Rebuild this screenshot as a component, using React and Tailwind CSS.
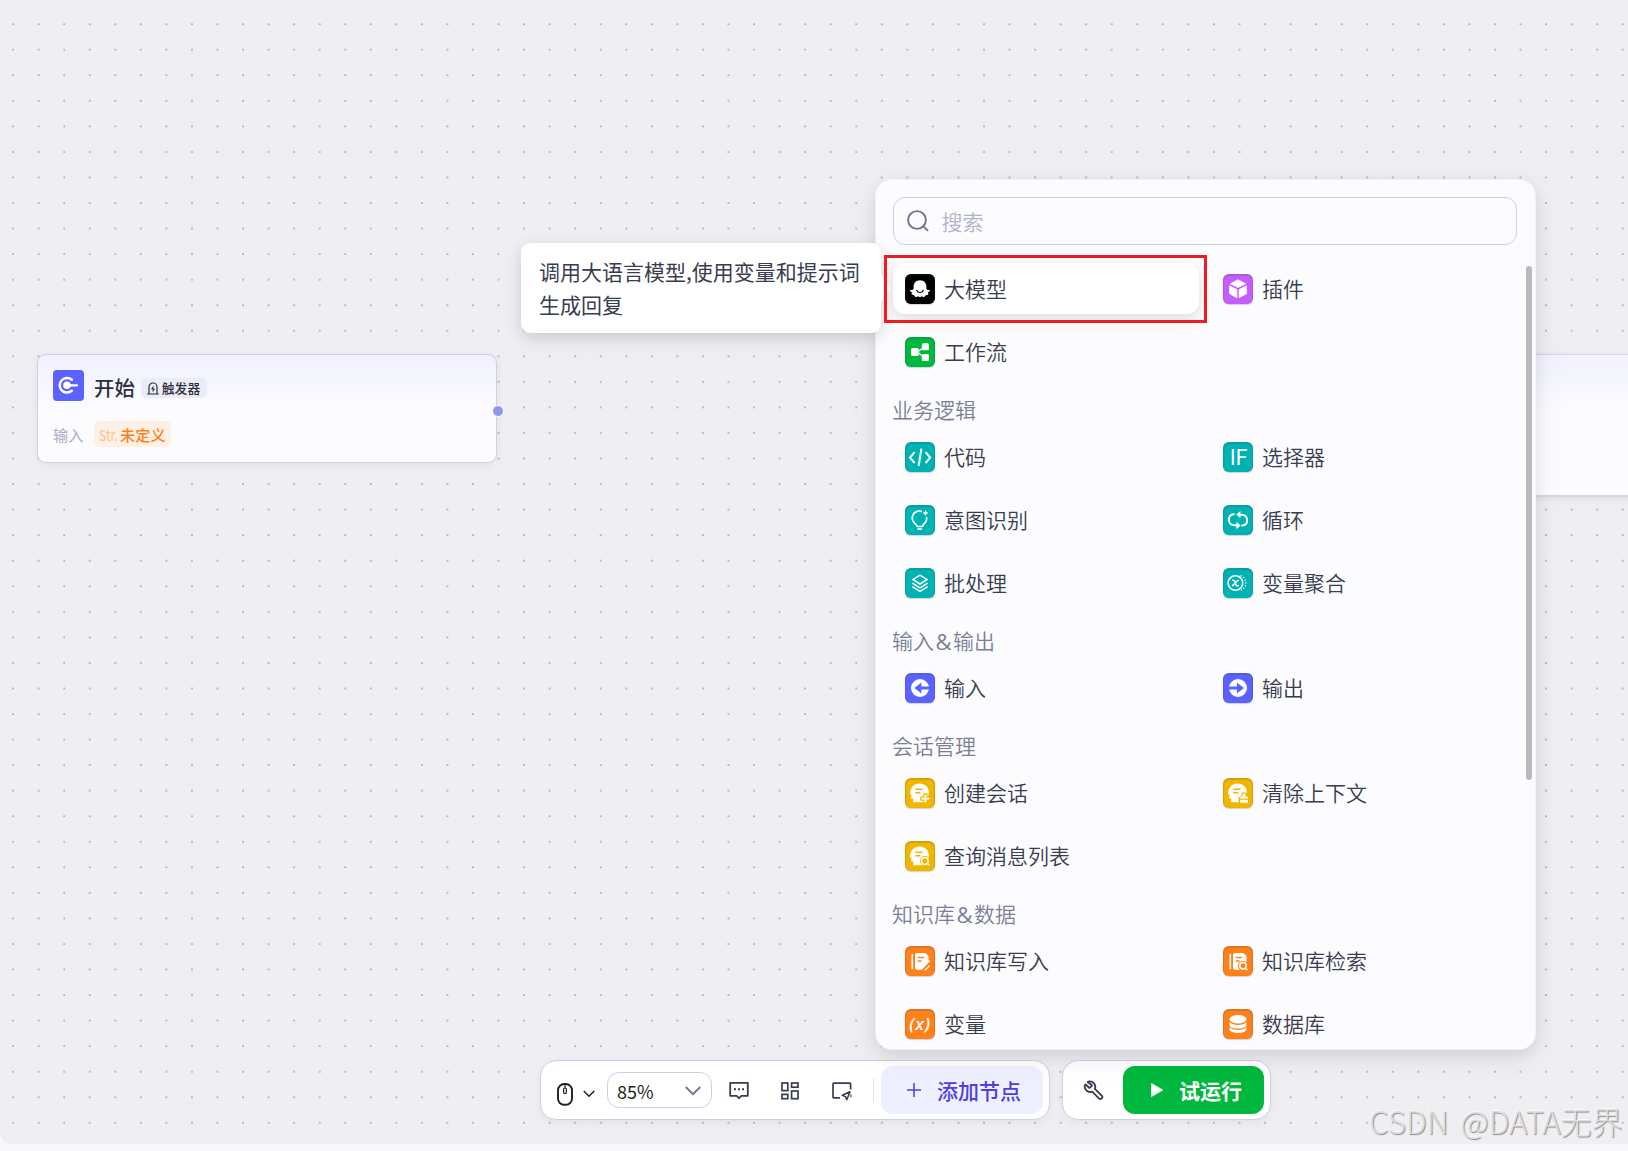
import { useState } from "react";

const TEAL = "bg-[#00b2b2]";
const ORANGE = "bg-[#ff811a]";
const YELLOW = "bg-[#f2b600]";
const INDIGO = "bg-[#5c62ff]";

const ChatHead = () => (
  <>
    <path
      d="M14.6 5.4c5.2 0 9.2 3.8 9.2 8.6 0 4-1.6 6.500-3.600 8v2.200H8.200v-3.600H6.800c-.5 0-.8-.4-.7-.9l.4-2.600-1.300-.9c-.3-.2-.3-.4-.2-.7C5.200 9.500 9.200 5.400 14.600 5.400Z"
      fill="#fff"
    />
    <path d="M10.300 11.200h7.200M10.300 14.700h5" stroke="#f2b600" strokeWidth="1.500" />
  </>
);

const BookPage = () => (
  <>
    <path d="M7.300 8.800v13.600" stroke="#fff" strokeWidth="1.600" strokeLinecap="round" />
    <path
      d="M12 7h8.300l3.200 3v10.500a3 3 0 0 1-3 3.200H12a2 2 0 0 1-2-2V9a2 2 0 0 1 2-2Z"
      fill="#fff"
    />
    <path d="M12.800 11.400h6.200M12.800 15.100h3.800" stroke="#ff811a" strokeWidth="1.500" />
  </>
);

const glyphs = {
  llm: (
    <>
      <path
        d="M15 6.200c4 0 6.400 2.900 6.400 6.400v2.100c.3 1.100 1.600 1.200 3.100 1.200.7 0 .8.800.3 1.200-.7.600-1.500.8-1.700 1.400-.2.700.5 1.400.1 2.100-.5.900-1.900.4-2.700.9-.6.4-.6 1.500-1.600 1.600-1 .1-1.500-.9-2.300-.9-.6 0-.9 1-1.700 1s-1-1-1.700-1c-.8 0-1.300 1-2.300.9-1-.1-.9-1.200-1.500-1.600-.8-.5-2.200 0-2.700-.9-.4-.7.3-1.400.1-2.100-.2-.6-1-.8-1.700-1.400-.5-.4-.4-1.200.3-1.200 1.500 0 2.900-.1 3.200-1.200v-2.100C8.600 9.100 11 6.200 15 6.200Z"
        fill="#fff"
      />
      <path d="M11.700 16.300c1.200 2.900 5.400 2.900 6.600 0" stroke="#000" strokeWidth="1.100" fill="none" strokeLinecap="round" />
    </>
  ),
  plugin: (
    <g fill="#fff" stroke="#fff" strokeWidth=".8" strokeLinejoin="round">
      <path d="M15 5.800 22.500 9.700 15 13.500 7.500 9.700Z" />
      <path d="M6.600 11.800 13.900 15.600V23.700L6.600 19.700Z" />
      <path d="M23.400 11.800 16.100 15.600V23.700L23.400 19.700Z" />
    </g>
  ),
  workflow: (
    <>
      <rect x="6" y="11" width="7.800" height="8" rx="1.500" fill="#fff" />
      <rect x="16.800" y="6.200" width="7.200" height="7" rx="1.500" fill="#fff" />
      <rect x="16.800" y="17" width="7.200" height="7" rx="1.500" fill="#fff" />
      <path d="M12.500 15 18.500 10.500M12.500 15l6 5" stroke="#fff" strokeWidth="1.300" fill="none" />
    </>
  ),
  code: (
    <path
      d="M9.600 10.200 5 15.600l4.600 5.400M20.600 10.200l4.600 5.400-4.600 5.400M16.400 6.600 13.700 23.800"
      stroke="#fff"
      strokeWidth="2"
      fill="none"
    />
  ),
  intent: (
    <>
      <path
        d="M17 6.600a7 7 0 0 0-7 12c1 .8 1.800 1.800 2.200 2.900h5.200c.3-1.200.9-2 1.900-2.900a7 7 0 0 0 2.200-6.600"
        stroke="#fff"
        strokeWidth="1.700"
        fill="none"
      />
      <path d="M12.500 24h4.600" stroke="#fff" strokeWidth="1.700" />
      <path d="M20.600 5l.9 2.100 2.100.9-2.100.9-.9 2.100-.9-2.100-2.100-.9 2.100-.9Z" fill="#fff" />
    </>
  ),
  loop: (
    <>
      <path
        d="M10.800 9.300C7.800 9.500 5.900 11.800 5.900 14.700c0 3.100 2.200 5.500 5.300 5.500h3M19.200 20.600c3-.2 4.900-2.500 4.900-5.400 0-3.100-2.200-5.500-5.300-5.500h-3"
        stroke="#fff"
        strokeWidth="2"
        fill="none"
        strokeLinecap="round"
      />
      <path d="M17.400 5.900v7.400l-4.200-3.700ZM13.400 24.200v-7.500l4.200 3.800Z" fill="#fff" />
    </>
  ),
  batch: (
    <path
      d="M15 7.200 22 11.600 15 16 8 11.600ZM7.300 15.200l7.700 4.700 7.700-4.700M7.300 18.700l7.700 4.700 7.700-4.700"
      stroke="#fff"
      strokeWidth="1.500"
      fill="none"
    />
  ),
  merge: (
    <>
      <circle cx="12.400" cy="15" r="7.300" stroke="#fff" strokeWidth="1.600" fill="none" />
      <path
        d="M9.200 12.300c2-.6 2.600.3 3.100 2.700s1.200 3.300 3.400 2.700M15.800 12.300c-2.300 0-4.600 5.400-6.900 5.400"
        stroke="#fff"
        strokeWidth="1.400"
        fill="none"
      />
      <path
        d="M17.600 7.700a7.700 7.700 0 0 1 0 14.600"
        stroke="#fff"
        strokeWidth="1.300"
        strokeDasharray="1.200 1.700"
        fill="none"
      />
    </>
  ),
  input: (
    <>
      <circle cx="15" cy="15" r="9" fill="#fff" />
      <path d="M9.300 15 16.400 9.600v3.900H25v3h-8.600v3.900Z" fill="#5c62ff" />
    </>
  ),
  output: (
    <>
      <circle cx="15" cy="15" r="9" fill="#fff" />
      <path d="M21 15 13.900 9.600v3.900H5v3h8.900v3.900Z" fill="#5c62ff" />
    </>
  ),
  chatAdd: (
    <>
      <ChatHead />
      <path d="M20.400 15.200v10.600M15.200 20.600h10.600" stroke="#f2b600" strokeWidth="4.200" />
      <path d="M20.400 16.600v8M16.400 20.600h8" stroke="#fff" strokeWidth="1.800" />
    </>
  ),
  chatClear: (
    <>
      <ChatHead />
      <path d="M15.600 26v-6.500l3-2V14.500h5l1 3 2 2V26Z" fill="#f2b600" />
      <path d="M19.700 18.600v-2.800h2.800v2.800h1.500a1 1 0 0 1 1 1v1H17.200v-1a1 1 0 0 1 1-1ZM17.200 21.700H25v3.100h-7.800Z" fill="#fff" />
    </>
  ),
  chatSearch: (
    <>
      <ChatHead />
      <path d="M20.300 20.300l4.600 4.600" stroke="#f2b600" strokeWidth="3.500" />
      <circle cx="19.900" cy="19.900" r="4.900" fill="#f2b600" />
      <circle cx="19.900" cy="19.900" r="3.300" stroke="#fff" strokeWidth="1.400" fill="none" />
      <path d="M22.300 22.300l2.200 2.200" stroke="#fff" strokeWidth="1.500" />
    </>
  ),
  bookWrite: (
    <>
      <BookPage />
      <path d="M14.500 26 26 13.600V26Z" fill="#ff811a" />
      <path d="M16.800 22.800l7.300-8M20.200 24l4-4" stroke="#fff" strokeWidth="1.500" strokeLinecap="round" />
    </>
  ),
  bookSearch: (
    <>
      <BookPage />
      <circle cx="20" cy="19.900" r="5" fill="#ff811a" />
      <path d="M20 20l5 5" stroke="#ff811a" strokeWidth="4" />
      <circle cx="20" cy="19.700" r="3.200" stroke="#fff" strokeWidth="1.500" fill="none" />
      <path d="M22.300 22l2 2" stroke="#fff" strokeWidth="1.600" />
    </>
  ),
  database: (
    <>
      <ellipse cx="15" cy="10.200" rx="8.400" ry="4.200" fill="#fff" />
      <path d="M6.600 12.700c1.400 2.200 4.500 3.200 8.400 3.200s7-1 8.400-3.200v3.200c0 2.200-3.700 3.700-8.400 3.700s-8.400-1.500-8.400-3.700Z" fill="#fff" />
      <path d="M6.600 18.100c1.400 1.900 4.500 2.900 8.400 2.900s7-1 8.400-2.900v2.100c0 2.200-3.700 3.700-8.400 3.700s-8.400-1.500-8.400-3.700Z" fill="#fff" />
    </>
  ),
};

const groups = [
  {
    title: "",
    items: [
      { id: "llm", name: "大模型", color: "bg-black" },
      { id: "plugin", name: "插件", color: "bg-[#c45eff]" },
      { id: "workflow", name: "工作流", color: "bg-[#00b83e]" },
    ],
  },
  {
    title: "业务逻辑",
    items: [
      { id: "code", name: "代码", color: TEAL },
      { id: "if", name: "选择器", color: TEAL, label: "IF" },
      { id: "intent", name: "意图识别", color: TEAL },
      { id: "loop", name: "循环", color: TEAL },
      { id: "batch", name: "批处理", color: TEAL },
      { id: "merge", name: "变量聚合", color: TEAL },
    ],
  },
  {
    title: "输入&输出",
    items: [
      { id: "input", name: "输入", color: INDIGO },
      { id: "output", name: "输出", color: INDIGO },
    ],
  },
  {
    title: "会话管理",
    items: [
      { id: "chatAdd", name: "创建会话", color: YELLOW },
      { id: "chatClear", name: "清除上下文", color: YELLOW },
      { id: "chatSearch", name: "查询消息列表", color: YELLOW },
    ],
  },
  {
    title: "知识库&数据",
    items: [
      { id: "bookWrite", name: "知识库写入", color: ORANGE },
      { id: "bookSearch", name: "知识库检索", color: ORANGE },
      { id: "variable", name: "变量", color: ORANGE, label: "(x)" },
      { id: "database", name: "数据库", color: ORANGE },
    ],
  },
];

const NodeIcon = ({ item }) => (
  <span
    className={`flex size-[30px] shrink-0 items-center justify-center rounded-[6px] text-white shadow-[inset_0_1px_1px_1px_rgba(60,60,90,0.18),0_1px_1px_rgba(60,60,110,0.22)] ${item.color}`}
  >
    {item.label === "IF" && (
      <span className="pb-[3px] text-[22px] leading-[27px] font-normal tracking-[-0.8px]">IF</span>
    )}
    {item.label === "(x)" && (
      <span className="pb-px font-['Open_Sans',sans-serif] text-[17px] leading-[27px] font-semibold tracking-[0.8px] italic">
        (x)
      </span>
    )}
    {!item.label && (
      <svg viewBox="0 0 30 30" className="size-[30px]" fill="none">
        {glyphs[item.id]}
      </svg>
    )}
  </span>
);

const GroupTitle = ({ title }) => {
  const [before, after] = title.split("&");

  return (
    <h3 className="mt-[13px] mb-px -ml-px flex h-10 items-center text-[21px] font-[350] text-[#7b7f95]">
      {before}
      {after && (
        <>
          <span className="px-[1.5px] font-['Open_Sans',sans-serif] text-[22px] font-normal">&amp;</span>
          {after}
        </>
      )}
    </h3>
  );
};

const NodePanel = ({ active, setActive }) => (
  <div className="absolute top-[179px] left-[875px] flex h-[871px] w-[661px] flex-col overflow-hidden rounded-[17px] border border-[#f1f1fa] bg-[#fcfcff] px-[17px] pt-[17px]">
    <div className="flex h-12 w-[624px] shrink-0 items-center gap-[12px] rounded-[12px] border border-[#cfcfe2] px-[13px]">
      <svg viewBox="0 0 22 22" className="size-[22px]" fill="none" stroke="#71758b" strokeWidth="1.900">
        <circle cx="10" cy="10" r="8.900" />
        <path d="M16.400 16.400 21 20.800" />
      </svg>
      <span className="ml-[0.5px] text-[21px] leading-8 font-[350] text-[#b0b2c9]">搜索</span>
    </div>

    <div className="mt-[18px] w-[624px]">
      {groups.map((group, index) => (
        <div key={index}>
          {group.title && <GroupTitle title={group.title} />}
          <div className="grid grid-cols-2 gap-3">
            {group.items.map((item) => (
              <div
                key={item.id}
                onClick={() => setActive(item.id)}
                className={`flex h-[51px] cursor-pointer items-center gap-[9px] rounded-[12px] px-3 text-[21px] text-[#383c4e] ${
                  active === item.id
                    ? "bg-white shadow-[0_4px_12px_rgba(0,0,0,0.08),0_8px_24px_rgba(0,0,0,0.05)]"
                    : ""
                }`}
              >
                <NodeIcon item={item} />
                <span className="font-[350]">{item.name}</span>
              </div>
            ))}
          </div>
        </div>
      ))}
    </div>
  </div>
);

const StartNode = () => (
  <div className="absolute top-[354px] left-[37px] h-[109px] w-[460px] rounded-[9px] border border-[#cfcfe2] bg-[linear-gradient(180deg,#f1f1ff_0%,#fbfbff_50%,#fcfcff_55%)] px-[15px] pt-[15px] shadow-[0_2px_8px_rgba(0,0,0,0.06)]">
    <div className="flex h-[31px] items-center">
      <span className="flex size-[31px] items-center justify-center rounded-[4px] bg-[#5c62ff]">
        <svg viewBox="0 0 31 31" className="size-[31px]" fill="none" stroke="#fff">
          <path d="M18.800 9.800a7.300 7.300 0 1 0 0 11" strokeWidth="2.500" strokeLinecap="round" />
          <path d="M14 15.300h10" strokeWidth="2.200" strokeLinecap="round" />
          <circle cx="14" cy="15.300" r="3.800" fill="#fff" stroke="none" />
        </svg>
      </span>
      <span className="mt-[2px] ml-[10px] text-[20.4px] leading-8 font-medium text-[#2c2f3c]">开始</span>
      <span className="mt-[5px] ml-[6px] flex h-5 w-[66px] items-center gap-[3px] rounded-[5px] bg-[#ececf7] pl-[6px] text-[12.8px] font-medium text-[#2c2f3c]">
        <svg viewBox="0 0 12 13" className="h-[13px] w-3" fill="none" stroke="#2c2f3c" strokeWidth="1.200">
          <path d="M2 12V5a4 4 0 0 1 8 0v7M.2 12h11.600" />
          <path d="M6.600 3.600 4 7.200h1.600v3L8.200 6.700H6.400Z" fill="#2c2f3c" stroke="none" />
        </svg>
        触发器
      </span>
    </div>
    <div className="mt-5 flex items-center text-[15.2px]">
      <span className="w-[41px] leading-[22px] text-[#a9abc4]">输入</span>
      <span className="flex h-[26px] w-[77px] items-center rounded-[5px] bg-[#fff0e5] pl-[5px]">
        <span className="w-[21px] origin-left scale-x-80 text-[#ffc08a]">Str.</span>
        <span className="mt-px font-medium whitespace-nowrap text-[#ff811a]">未定义</span>
      </span>
    </div>
    <span className="absolute top-[50px] right-[-8px] size-3 rounded-full border border-white bg-[#9197f1]" />
  </div>
);

const Tooltip = () => (
  <div className="absolute top-[243px] left-[521px] h-[90px] w-[360px] rounded-[9px] bg-white px-[18px] pt-[12px] text-[21px] leading-[33px] text-[#383c4e] shadow-[0_4px_14px_rgba(0,0,0,0.1),0_8px_24px_rgba(0,0,0,0.06)]">
    <p className="whitespace-nowrap">调用大语言模型,使用变量和提示词</p>
    <p>生成回复</p>
    <svg viewBox="0 0 9 36" className="absolute top-[27px] left-[360px] h-9 w-[9px]">
      <path d="M0 0c0 6 2 9 5 12 3 2.500 4 4 4 6s-1 3.500-4 6c-3 3-5 6-5 12Z" fill="#fff" />
    </svg>
  </div>
);

const Toolbar = () => (
  <div className="absolute top-[1060px] left-[540px] flex gap-[12px]">
    <div className="flex h-[60px] w-[510px] items-center rounded-[16px] border border-[#cfd0e2] bg-white shadow-[0_3px_10px_rgba(0,0,0,0.05)]">
      <svg viewBox="0 0 16 23" className="mt-[8px] ml-4 h-[23px] w-4" fill="none" stroke="#1c1f23">
        <rect x="1" y="1" width="14" height="20.800" rx="6.200" strokeWidth="1.900" />
        <path d="M8 1v4" strokeWidth="1.200" />
        <rect x="6.600" y="5" width="2.800" height="5.600" rx="1.400" strokeWidth="1.200" />
      </svg>
      <svg viewBox="0 0 12 8" className="mt-[7px] ml-[10px] h-2 w-3" fill="none" stroke="#1c1f23" strokeWidth="1.500">
        <path d="M.8 1 6 6.200 11.200 1" />
      </svg>
      <div className="ml-3 flex h-9 w-[105px] items-center justify-between rounded-[12px] border border-[#cfcfe2] pr-[10px] pl-[9px] text-[18px] text-[#1c1f23]">
        <span className="mt-[2px]">85%</span>
        <svg viewBox="0 0 16 10" className="mt-px h-[10px] w-4" fill="none" stroke="#71758b" strokeWidth="1.900">
          <path d="M.8 1 8 8.200 15.200 1" />
        </svg>
      </div>
      <svg viewBox="0 0 20 20" className="mt-[2px] ml-[17px] size-5" fill="none" stroke="#383c4e" strokeWidth="1.800">
        <path d="M1.200 1.800h17.600v13H12.400L10 17.200 7.600 14.800H1.200Z" strokeLinejoin="round" />
        <path d="M5 8.300h2M9 8.300h2M13 8.300h2" strokeWidth="2" />
      </svg>
      <svg viewBox="0 0 18 18" className="mt-px ml-[32px] size-[18px]" fill="none" stroke="#383c4e" strokeWidth="1.700">
        <rect x="1" y="1" width="5.800" height="7.600" />
        <rect x="10.600" y="1" width="6.400" height="4.200" />
        <rect x="1" y="12.400" width="5.800" height="4.300" />
        <rect x="10.600" y="9" width="6.400" height="7.700" />
      </svg>
      <svg viewBox="0 0 20 20" className="mt-[2px] ml-[33px] size-5" fill="none" stroke="#383c4e" strokeWidth="1.700">
        <path d="M8 16.800H1.800a.8.800 0 0 1-.8-.8V3a.8.800 0 0 1 .8-.8h16a.8.800 0 0 1 .8.800v5.500" />
        <path d="M18 10.800 10.200 14.200l3.300 1.400 1.300 3.200Z" strokeWidth="1.500" strokeLinejoin="round" />
        <path d="M18.900 13.500v2.800" strokeWidth="1.200" />
      </svg>
      <span className="ml-[21px] h-6 w-px bg-[#e3e3ee]" />
      <button className="ml-[7px] flex h-12 w-[162px] items-center rounded-[12px] bg-[#eff0ff] pl-[26px] text-[21px] font-medium text-[#4d3fe0]">
        <svg viewBox="0 0 14 14" className="size-[14px]" stroke="#4d3fe0" strokeWidth="1.500">
          <path d="M7 0v14M0 7h14" />
        </svg>
        <span className="mt-px ml-4">添加节点</span>
      </button>
    </div>
    <div className="flex h-[60px] w-[209px] items-center rounded-[16px] border border-[#cfd0e2] bg-white shadow-[0_3px_10px_rgba(0,0,0,0.05)]">
      <svg viewBox="0 0 24 24" className="ml-[20px] size-[22px] -scale-x-100" fill="none" stroke="#383c4e" strokeWidth="2" strokeLinejoin="round">
        <path d="M14.700 6.300a1 1 0 0 0 0 1.400l1.600 1.600a1 1 0 0 0 1.400 0l3.100-3.100c.4-.4 1-.2 1.100.3a6 6 0 0 1-7.900 7.200l-7.400 7.400a2.100 2.100 0 0 1-3-3l7.400-7.400a6 6 0 0 1 7.200-7.900c.5.100.7.700.3 1.100Z" />
      </svg>
      <button className="ml-[18px] flex h-12 w-[141px] items-center rounded-[12px] bg-[#00b83e] pl-7 text-[21px] font-bold text-white">
        <svg viewBox="0 0 12 14" className="h-[14px] w-3" fill="#fff">
          <path d="M0 .8Q0 0 .8.300L11.600 6.500q.6.500 0 1L.8 13.700Q0 14 0 13.200Z" />
        </svg>
        <span className="mt-px ml-4">试运行</span>
      </button>
    </div>
  </div>
);

const App = () => {
  const [active, setActive] = useState("llm");

  return (
    <div className="flex h-[1151px] w-[1628px] flex-col overflow-hidden bg-[#f7f7fc] font-['Noto_Sans_CJK_SC',sans-serif]">
      <div className="relative h-[1144px] overflow-hidden rounded-bl-[11px] bg-[#eeeef3]">
        <svg className="block h-full w-full">
          <defs>
            <pattern id="dots" width="25.550" height="25.550" patternUnits="userSpaceOnUse" x="0.300" y="11.300">
              <circle cx="12.800" cy="12.800" r="0.850" fill="#8f8f98" />
            </pattern>
          </defs>
          <rect width="100%" height="100%" fill="url(#dots)" />
        </svg>

        <StartNode />
        {/* end node, mostly covered by the panel */}
        <div className="absolute top-[354px] left-[1400px] h-[143px] w-[300px] rounded-[9px] border border-b-2 border-[#d6d6e4] bg-[linear-gradient(180deg,#f1f1ff_0%,#fbfbff_38%,#fcfcfe_42%)] shadow-[0_2px_8px_rgba(0,0,0,0.06)]" />

        <Toolbar />
        {/* panel shadow falls over the toolbar */}
        <div className="absolute top-[179px] left-[875px] h-[871px] w-[661px] rounded-[17px] shadow-[0_5px_16px_rgba(0,0,0,0.09),0_10px_36px_rgba(0,0,0,0.05)]" />
        <NodePanel active={active} setActive={setActive} />
        <span className="absolute top-[266px] left-[1526px] h-[514px] w-[6px] rounded-full bg-[#b9babd]" />
        <Tooltip />
        <div className="absolute top-[255px] left-[884px] h-[68px] w-[323px] border-3 border-[#ed1c24]" />

        <span className="absolute top-[1098px] left-[1369px] text-[31px] leading-[46px] font-light [word-spacing:5px] whitespace-nowrap text-[#dededf] [text-shadow:1px_1px_1px_#8a8a8e,-1px_-1px_0_#f8f8f8]">
          CSDN @DATA无界
        </span>
      </div>
    </div>
  );
};

export default App;
